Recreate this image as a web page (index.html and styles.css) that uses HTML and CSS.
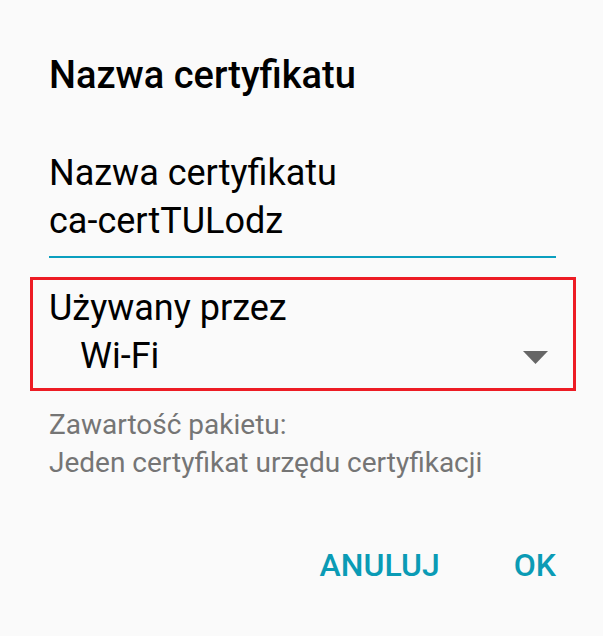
FILE: index.html
```html
<!DOCTYPE html>
<html>
<head>
  <meta charset="utf-8">
  <meta name="viewport" content="width=device-width">
  <title>Nazwa certyfikatu</title>
  <link rel="stylesheet" href="styles.css">
</head>
<body>
  <div class="dialog">
    <h1 class="dialog-title">Nazwa certyfikatu</h1>

    <div class="field">
      <div class="field-label">Nazwa certyfikatu</div>
      <div class="field-input">ca-certTULodz</div>
    </div>

    <div class="usage">
      <div class="field-label">Używany przez</div>
      <div class="spinner">
        <span class="spinner-value">Wi-Fi</span>
        <svg class="spinner-arrow" width="25" height="13" viewBox="0 0 25 13">
          <polygon points="0,0 25,0 12.5,13" fill="#666"/>
        </svg>
      </div>
    </div>

    <p class="contents">Zawartość pakietu:<br>Jeden certyfikat urzędu certyfikacji</p>

    <div class="actions">
      <button class="btn">ANULUJ</button>
      <button class="btn">OK</button>
    </div>
  </div>
</body>
</html>
```

FILE: styles.css
```css
*{
  box-sizing:border-box;
}
body{
  margin:0;
  background-color:#fafafa;
  font-family:Roboto, "Noto Sans", sans-serif;
  color:#000;
  height:636px;
  overflow:hidden;
}
.dialog{
  padding:55px 47px 0 49px;
}
.dialog-title{
  margin:0;
  font-size:38px;
  line-height:40px;
  font-weight:500;
}
.field{
  margin-top:54px;
  padding-bottom:11px;
  border-bottom:2px solid #0a9fbf;
}
.field-label,
.field-input{
  font-size:36px;
  line-height:48px;
}
.usage{
  margin:19px -20px 0 -19px;
  border:3px solid #ed1c24;
  padding:4px 25px 8px 16px;
}
.spinner{
  display:flex;
  align-items:center;
  justify-content:space-between;
  padding-left:31px;
}
.spinner-value{
  font-size:36px;
  line-height:48px;
}
.spinner-arrow{
  display:block;
  margin-top:2px;
}
.contents{
  margin:15px 0 0;
  font-size:28px;
  line-height:38px;
  color:#757575;
}
.actions{
  display:flex;
  justify-content:flex-end;
  gap:74px;
  margin-top:65px;
}
.btn{
  background:none;
  border:none;
  padding:0;
  font-family:inherit;
  font-size:32px;
  line-height:36px;
  font-weight:500;
  color:#0a9bb5;
  cursor:pointer;
}
```
